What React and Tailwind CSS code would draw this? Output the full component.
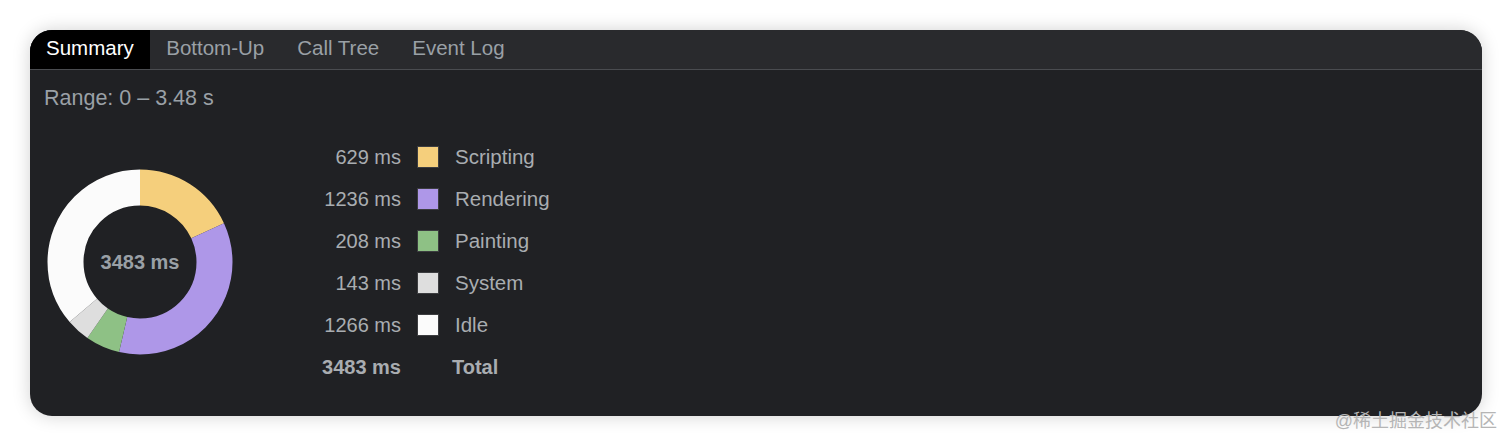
import React from 'react';

const tabs = ['Summary', 'Bottom-Up', 'Call Tree', 'Event Log'];

const rows = [
  { ms: 629, label: 'Scripting', color: '#f5cf7c' },
  { ms: 1236, label: 'Rendering', color: '#ae97e8' },
  { ms: 208, label: 'Painting', color: '#8ec185' },
  { ms: 143, label: 'System', color: '#dedede' },
  { ms: 1266, label: 'Idle', color: '#fbfbfb' },
];

// rounded totals don't add up, devtools shows 3483
const totalLabel = '3483 ms';
const sum = rows.reduce((s, r) => s + r.ms, 0);

const Donut = () => {
  const r = 74.5;
  const c = 2 * Math.PI * r;
  let offset = 0;
  return (
    <div className="relative w-[186px] h-[186px]">
      <svg width="186" height="186" viewBox="0 0 186 186" className="-rotate-90">
        {rows.map((row) => {
          const len = (row.ms / sum) * c;
          const el = (
            <circle
              key={row.label}
              cx="93"
              cy="93"
              r={r}
              fill="none"
              stroke={row.color}
              strokeWidth="36"
              strokeDasharray={`${len} ${c - len}`}
              strokeDashoffset={-offset}
            />
          );
          offset += len;
          return el;
        })}
      </svg>
      <div className="absolute inset-0 flex items-center justify-center text-[20px] font-bold text-[#9aa0a6]">
        {totalLabel}
      </div>
    </div>
  );
};

const App = () => {
  return (
    <div className="relative w-[1512px] h-[447px] bg-white pt-[30px] px-[30px] font-['Liberation_Sans',Arial,sans-serif]">
      <div className="h-[386px] rounded-[22px] overflow-hidden bg-[#202124] shadow-[0_0_18px_rgba(0,0,0,0.18)]">
        <div className="flex h-[40px] bg-[#292a2d] border-b border-[#4a4c50]">
          {tabs.map((t, i) => (
            <div
              key={t}
              className={
                i === 0
                  ? 'flex items-center pb-[3px] px-[16px] text-[20.5px] bg-black text-white'
                  : 'flex items-center pb-[3px] px-[16.5px] text-[20.5px] text-[#9aa0a6]'
              }
            >
              {t}
            </div>
          ))}
        </div>
        <div className="pt-[16px] pl-[14px] text-[21.5px] leading-[24px] text-[#9aa0a6]">
          Range: 0 – 3.48 s
        </div>
        <div className="flex items-center mt-[26px] pl-[17px]">
          <Donut />
          <div className="ml-[71px] text-[20px] text-[#a9adb1]">
            {rows.map((row) => (
              <div key={row.label} className="flex items-center h-[42px]">
                <div className="w-[97px] text-right">{row.ms} ms</div>
                <div
                  className="ml-[16px] w-[22px] h-[22px] border border-[#3c3d40]"
                  style={{ backgroundColor: row.color }}
                />
                <div className="ml-[16px] text-[20.5px]">{row.label}</div>
              </div>
            ))}
            <div className="flex items-center h-[42px] font-bold">
              <div className="w-[97px] text-right">{totalLabel}</div>
              <div className="ml-[51px]">Total</div>
            </div>
          </div>
        </div>
      </div>
      <div className="absolute right-[15px] top-[408px] text-[18px] text-[#b5b5b5] font-['Liberation_Sans','Noto_Sans_CJK_SC',sans-serif]">
        @稀土掘金技术社区
      </div>
    </div>
  );
};

export default App;
